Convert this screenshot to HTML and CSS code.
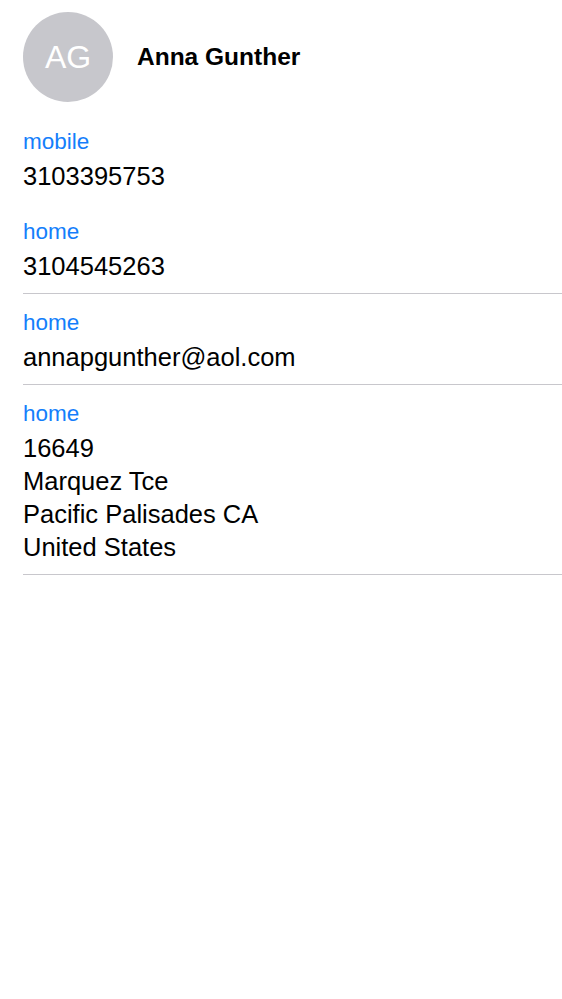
FILE: index.html
```html
<!DOCTYPE html>
<html lang="en">
<head>
    <meta charset="UTF-8">
    <meta name="viewport" content="width=device-width, initial-scale=1.0">
    <title>Anna Gunther</title>
    <link rel="stylesheet" href="styles.css">
</head>

<body>
    <div class="contact-header">
        <div class="avatar">AG</div>
        <h1 class="contact-name">Anna Gunther</h1>
    </div>

    <div class="section section-first">
        <div class="field">
            <div class="field-label">mobile</div>
            <div class="field-value">3103395753</div>
        </div>
        <div class="field">
            <div class="field-label">home</div>
            <div class="field-value">3104545263</div>
        </div>
    </div>

    <div class="section">
        <div class="field">
            <div class="field-label">home</div>
            <div class="field-value">annapgunther@aol.com</div>
        </div>
    </div>

    <div class="section">
        <div class="field">
            <div class="field-label">home</div>
            <div class="field-value">16649<br>Marquez Tce<br>Pacific Palisades CA<br>United States</div>
        </div>
    </div>
</body>
</html>
```

FILE: styles.css
```css
body {
    font-family: "Liberation Sans", Arial, sans-serif;
    margin: 0;
    padding: 0;
    background-color: #fff;
    color: #000;
}

.contact-header {
    display: flex;
    align-items: center;
    gap: 24px;
    padding: 12px 0 11px 23px;
}

.avatar {
    width: 90px;
    height: 90px;
    border-radius: 50%;
    background-color: #c7c7cc;
    color: #fff;
    font-size: 32px;
    display: flex;
    align-items: center;
    justify-content: center;
    flex-shrink: 0;
}

.contact-name {
    margin: 0;
    font-size: 24.5px;
    font-weight: bold;
}

.section {
    margin-left: 23px;
    padding: 11px 0 10px;
    border-bottom: 1px solid #c8c7cc;
    display: flex;
    flex-direction: column;
    gap: 21px;
}

.field-label {
    color: #147efb;
    font-size: 22.5px;
    line-height: 36px;
}

.field-value {
    font-size: 25.5px;
    line-height: 33px;
}
```
